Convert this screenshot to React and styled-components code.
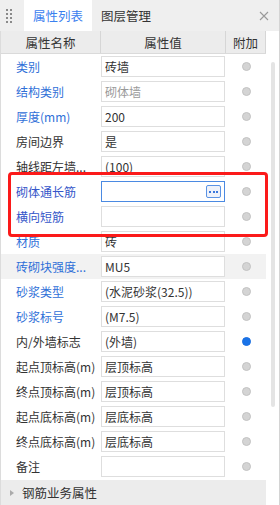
import React from "react";
import styled, { createGlobalStyle } from "styled-components";

const GlobalStyle = createGlobalStyle`
  * {
    margin: 0;
    padding: 0;
    box-sizing: border-box;
  }
  body {
    background: #fff;
    font-family: "Noto Sans CJK SC", "Noto Sans", sans-serif;
    font-size: 12px;
    color: #333;
  }
`

const Panel = styled.div`
  width: 280px;
  height: 505px;
  display: flex;
  flex-direction: column;
  overflow: hidden;
  border-right: 1px solid #d4d4d4;
`

const TabBar = styled.div`
  height: 31px;
  background: #efefef;
  display: flex;
  align-items: stretch;
  padding-left: 6px;
`

const Grip = styled.div`
  width: 18px;
  display: flex;
  align-items: center;
`

const Tab = styled.div`
  display: flex;
  align-items: center;
  padding: 0 9px;
  background: ${p => (p.$active ? "#fff" : "transparent")};
  color: ${p => (p.$active ? "#3a80ef" : "#333")};
  font-size: 12.5px;
`

const Close = styled.div`
  margin-left: auto;
  width: 30px;
  display: flex;
  align-items: center;
  justify-content: center;
`

const Main = styled.div`
  flex: 1;
  display: flex;
  min-height: 0;
`

const Table = styled.div`
  width: 266px;
  display: flex;
  flex-direction: column;
  border-left: 1px solid #dcdcdc;
`

const HeadRow = styled.div`
  height: 23px;
  display: grid;
  grid-template-columns: 100px 125px 40px;
  background: #ececec;
  border-bottom: 1px solid #dadada;
`

const HeadCell = styled.div`
  display: flex;
  align-items: center;
  justify-content: center;
  border-right: 1px solid #d6d6d6;
  font-size: 12.5px;
`

const Row = styled.div`
  height: 25px;
  display: grid;
  grid-template-columns: 100px 125px 40px;
  align-items: center;
  background: ${p => (p.$hover ? "#f2f2f2" : "transparent")};
`

const Label = styled.div`
  padding-left: 15px;
  color: ${p => (p.$blue ? p.$blue : "#333")};
  white-space: nowrap;
  overflow: hidden;
  text-overflow: ellipsis;
`

const ValueBox = styled.div`
  height: 21px;
  margin-right: 1px;
  border: 1px solid ${p => (p.$focus ? "#4b8ae2" : "#dedede")};
  background: #fff;
  display: flex;
  align-items: center;
  padding-left: 3px;
  color: ${p => (p.$muted ? "#9a9a9a" : "#333")};
  white-space: nowrap;
  overflow: hidden;
`

const MoreButton = styled.div`
  margin-left: auto;
  margin-right: 3px;
  width: 15px;
  height: 13px;
  border: 1px solid #5b93e4;
  border-radius: 2px;
  background: #eef2fa;
  display: flex;
  align-items: center;
  justify-content: center;
  gap: 1.5px;
  span {
    width: 2px;
    height: 2px;
    background: #3a78dc;
  }
`

const Radio = styled.div`
  justify-self: center;
  margin-left: 1px;
  width: 9px;
  height: 9px;
  border-radius: 50%;
  background: ${p => (p.$on ? "#1a73e8" : "#d4d4d4")};
  border: 1px solid ${p => (p.$on ? "#1a6fe0" : "#c2c2c2")};
`

const Marked = styled.div`
  position: relative;
  &::after {
    content: "";
    position: absolute;
    left: 7px;
    top: -7px;
    width: 254px;
    height: 59px;
    border: 3px solid #fb1a1a;
    border-radius: 4px;
    pointer-events: none;
  }
`

const Footer = styled.div`
  margin-top: auto;
  height: 25px;
  background: #ececec;
  display: flex;
  align-items: center;
  gap: 8px;
  padding-left: 9px;
  font-size: 12.5px;
  &::before {
    content: "";
    border-left: 4px solid #aaa;
    border-top: 3px solid transparent;
    border-bottom: 3px solid transparent;
  }
`

const Gutter = styled.div`
  flex: 1;
  background: #fff;
  padding: 31px 0 0 5px;
`

const Thumb = styled.div`
  width: 4px;
  height: 345px;
  border-radius: 2px;
  background: #e4e4e4;
`

const BLUE = "#2f6fd8"
const DEEP = "#3556c9"

const rows = [
  { label: "类别", value: "砖墙", blue: BLUE },
  { label: "结构类别", value: "砌体墙", blue: BLUE, muted: true },
  { label: "厚度(mm)", value: "200", blue: BLUE },
  { label: "房间边界", value: "是" },
  { label: "轴线距左墙...", value: "(100)" },
]

const marked = [
  { label: "砌体通长筋", value: "", blue: DEEP, focus: true },
  { label: "横向短筋", value: "", blue: DEEP },
]

const rest = [
  { label: "材质", value: "砖", blue: BLUE },
  { label: "砖砌块强度...", value: "MU5", blue: BLUE, hover: true },
  { label: "砂浆类型", value: "(水泥砂浆(32.5))", blue: BLUE },
  { label: "砂浆标号", value: "(M7.5)", blue: BLUE },
  { label: "内/外墙标志", value: "(外墙)", on: true },
  { label: "起点顶标高(m)", value: "层顶标高" },
  { label: "终点顶标高(m)", value: "层顶标高" },
  { label: "起点底标高(m)", value: "层底标高" },
  { label: "终点底标高(m)", value: "层底标高" },
  { label: "备注", value: "" },
]

function PropRow({ r }) {
  return (
    <Row $hover={r.hover}>
      <Label $blue={r.blue}>{r.label}</Label>
      <ValueBox $focus={r.focus} $muted={r.muted}>
        {r.value}
        {r.focus && (
          <MoreButton>
            <span />
            <span />
            <span />
          </MoreButton>
        )}
      </ValueBox>
      <Radio $on={r.on} />
    </Row>
  )
}

export default function App() {
  return (
    <div>
      <GlobalStyle />
      <Panel>
        <TabBar>
          <Grip>
            <svg width="6" height="14" viewBox="0 0 6 14">
              {[0, 4, 8, 12].map(y => (
                <g key={y} fill="#8a8a8a">
                  <rect x="0" y={y} width="2" height="2" />
                  <rect x="4" y={y} width="2" height="2" />
                </g>
              ))}
            </svg>
          </Grip>
          <Tab $active>属性列表</Tab>
          <Tab>图层管理</Tab>
          <Close>
            <svg width="10" height="10" viewBox="0 0 10 10">
              <path d="M1 1 L9 9 M9 1 L1 9" stroke="#9a9a9a" strokeWidth="1.1" />
            </svg>
          </Close>
        </TabBar>
        <Main>
          <Table>
            <HeadRow>
              <HeadCell>属性名称</HeadCell>
              <HeadCell>属性值</HeadCell>
              <HeadCell>附加</HeadCell>
            </HeadRow>
            {rows.map(r => <PropRow key={r.label} r={r} />)}
            <Marked>
              {marked.map(r => <PropRow key={r.label} r={r} />)}
            </Marked>
            {rest.map(r => <PropRow key={r.label} r={r} />)}
            <Footer>钢筋业务属性</Footer>
          </Table>
          <Gutter>
            <Thumb />
          </Gutter>
        </Main>
      </Panel>
    </div>
  );
}
